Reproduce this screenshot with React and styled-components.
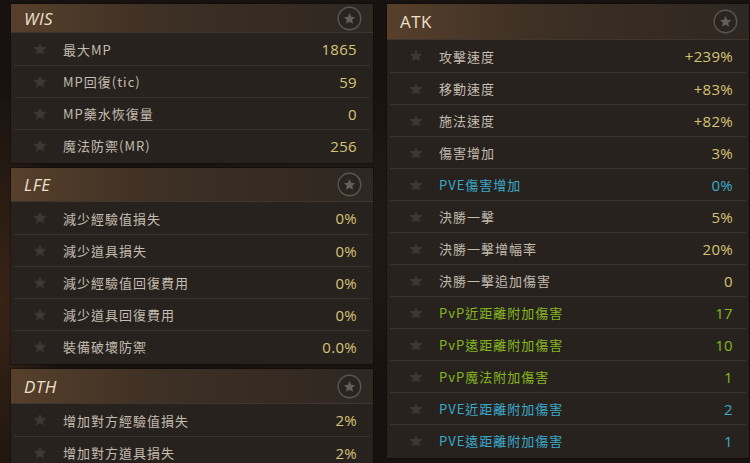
import React from 'react';
import styled, { createGlobalStyle } from 'styled-components';

const GlobalStyle = createGlobalStyle`
  html, body {
    margin: 0;
    padding: 0;
    background: #17120f;
  }
  body {
    font-family: "Noto Sans CJK TC", "Noto Sans", sans-serif;
  }
`;

const wis = [
  { label: '最大MP', value: '1865' },
  { label: 'MP回復(tic)', value: '59' },
  { label: 'MP藥水恢復量', value: '0' },
  { label: '魔法防禦(MR)', value: '256' },
];

const lfe = [
  { label: '減少經驗值損失', value: '0%' },
  { label: '減少道具損失', value: '0%' },
  { label: '減少經驗值回復費用', value: '0%' },
  { label: '減少道具回復費用', value: '0%' },
  { label: '裝備破壞防禦', value: '0.0%' },
];

const dth = [
  { label: '增加對方經驗值損失', value: '2%' },
  { label: '增加對方道具損失', value: '2%' },
];

const atk = [
  { label: '攻擊速度', value: '+239%' },
  { label: '移動速度', value: '+83%' },
  { label: '施法速度', value: '+82%' },
  { label: '傷害增加', value: '3%' },
  { label: 'PVE傷害增加', value: '0%', tone: 'blue' },
  { label: '決勝一擊', value: '5%' },
  { label: '決勝一擊增幅率', value: '20%' },
  { label: '決勝一擊追加傷害', value: '0' },
  { label: 'PvP近距離附加傷害', value: '17', tone: 'green' },
  { label: 'PvP遠距離附加傷害', value: '10', tone: 'green' },
  { label: 'PvP魔法附加傷害', value: '1', tone: 'green' },
  { label: 'PVE近距離附加傷害', value: '2', tone: 'blue' },
  { label: 'PVE遠距離附加傷害', value: '1', tone: 'blue' },
];

const labelColors = { blue: '#3aa9cc', green: '#86b81e' };
const valueColors = { blue: '#3aa9cc', green: '#86b81e' };

const Page = styled.div`
  width: 750px;
  height: 463px;
  overflow: hidden;
  box-sizing: border-box;
  padding: 4px 0 0 11px;
  display: flex;
  gap: 14px;
  background:
    radial-gradient(ellipse 60px 220px at 0px 300px, rgba(120, 70, 35, 0.35), transparent),
    radial-gradient(ellipse 200px 160px at 330px 230px, rgba(70, 50, 38, 0.25), transparent),
    #17120f;
`;

const Column = styled.div`
  width: 362px;
  display: flex;
  flex-direction: column;
  gap: 5px;
`;

const Panel = styled.section`
  background: #27221e;
  padding-bottom: 2px;
  box-shadow: 0 0 0 1px rgba(0, 0, 0, 0.25);
`;

const Header = styled.header`
  height: ${(p) => p.$h}px;
  display: flex;
  align-items: center;
  justify-content: space-between;
  padding: 0 11px 0 13px;
  box-sizing: border-box;
  background: linear-gradient(90deg, #573f2b 0%, #3e3024 40%, #2e2722 100%);
  border-bottom: 1px solid #40362e;
`;

const Title = styled.h2`
  margin: 0;
  font-family: "Open Sans", "Noto Sans", sans-serif;
  font-weight: 400;
  font-size: 17px;
  font-style: ${(p) => (p.$upright ? 'normal' : 'italic')};
  color: #ece0cc;
  letter-spacing: 0.5px;
`;

const Row = styled.div`
  height: 32px;
  display: flex;
  align-items: center;
  padding: 0 13px 0 18px;
  box-sizing: border-box;
  border-top: 1px solid #3a322c;
  margin: 0 3px;
  &:first-of-type {
    border-top: none;
  }
`;

const Label = styled.span`
  flex: 1;
  margin-left: 15px;
  font-size: 13px;
  letter-spacing: 1px;
  color: ${(p) => labelColors[p.$tone] || '#c4bcb0'};
`;

const Value = styled.span`
  font-family: "Open Sans", "Noto Sans", sans-serif;
  font-size: 15px;
  letter-spacing: 0.3px;
  color: ${(p) => valueColors[p.$tone] || '#d6c275'};
`;

const StarPath = 'M12 2.5l2.8 6.1 6.6.7-4.9 4.5 1.4 6.5L12 17l-5.9 3.3 1.4-6.5-4.9-4.5 6.6-.7z';

const RowStar = () => (
  <svg width="16" height="16" viewBox="0 0 24 24">
    <path d={StarPath} fill="#3e3834" />
  </svg>
);

const PinStar = () => (
  <svg width="25" height="25" viewBox="0 0 24 24">
    <circle cx="12" cy="12" r="10.8" fill="#2a2420" stroke="#5c544e" strokeWidth="1.3" />
    <g transform="translate(5.2 5.4) scale(0.57)">
      <path d={StarPath} fill="#665e58" />
    </g>
  </svg>
);

const StatPanel = ({ title, rows, headerHeight, upright }) => (
  <Panel>
    <Header $h={headerHeight}>
      <Title $upright={upright}>{title}</Title>
      <PinStar />
    </Header>
    {rows.map((r) => (
      <Row key={r.label}>
        <RowStar />
        <Label $tone={r.tone}>{r.label}</Label>
        <Value $tone={r.tone}>{r.value}</Value>
      </Row>
    ))}
  </Panel>
);

export default function App() {
  return (
    <>
      <GlobalStyle />
      <Page>
        <Column>
          <StatPanel title="WIS" rows={wis} headerHeight={29} />
          <StatPanel title="LFE" rows={lfe} headerHeight={34} />
          <StatPanel title="DTH" rows={dth} headerHeight={35} />
        </Column>
        <Column>
          <StatPanel title="ATK" rows={atk} headerHeight={36} upright />
        </Column>
      </Page>
    </>
  );
}
